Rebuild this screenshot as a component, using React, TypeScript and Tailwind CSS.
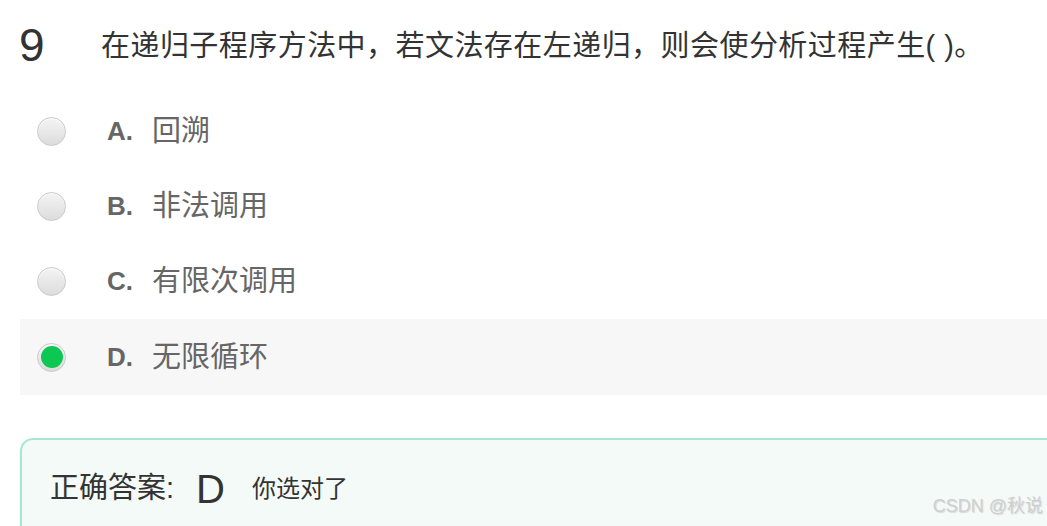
import React from 'react';

type Option = { key: string; text: string; selected?: boolean };

const options: Option[] = [
  { key: 'A', text: '回溯' },
  { key: 'B', text: '非法调用' },
  { key: 'C', text: '有限次调用' },
  { key: 'D', text: '无限循环', selected: true },
];

const font = "font-['Liberation_Sans','Noto_Sans_CJK_SC',sans-serif]";

function Radio({ checked }: { checked?: boolean }) {
  return (
    <div className="w-[29px] h-[29px] rounded-full border border-[#c9c9c9] bg-gradient-to-b from-[#f4f4f4] to-[#dcdcdc] flex items-center justify-center shadow-[inset_0_1px_1px_rgba(255,255,255,0.9)]">
      {checked && <div className="w-[22px] h-[22px] rounded-full bg-[#0cc752]" />}
    </div>
  );
}

export default function App() {
  return (
    <div className={`relative w-[1047px] h-[526px] overflow-hidden bg-white ${font}`}>
      <div className="flex items-center h-[92px] pl-[19px]">
        <span className="w-[82px] text-[46px] leading-none text-[#333] -mt-[2px]">9</span>
        <span className="text-[29px] leading-none text-[#333] tracking-[0.45px]">
          在递归子程序方法中，若文法存在左递归，则会使分析过程产生( )。
        </span>
      </div>

      <div className="flex flex-col pt-[2px]">
        {options.map((o) => (
          <div
            key={o.key}
            className={`ml-5 flex items-center h-[75px] pl-[17px] ${o.selected ? 'bg-[#f7f7f7] h-[76px]' : ''}`}
          >
            <Radio checked={o.selected} />
            <span className="ml-[41px] w-[45px] text-[26px] font-bold text-[#666]">{o.key}.</span>
            <span className="text-[29px] leading-none text-[#666]">{o.text}</span>
          </div>
        ))}
      </div>

      <div className="ml-5 mt-[43px] h-[140px] rounded-tl-[13px] border-t-2 border-l-2 border-[#a6e8cf] bg-[#f3faf8] pl-[28px] pt-[30px]">
        <div className="flex items-center h-[38px]">
          <span className="text-[29px] text-[#333]">正确答案:</span>
          <span className="ml-[22px] text-[40px] leading-none text-[#333]">D</span>
          <span className="ml-[27px] text-[24px] text-[#333]">你选对了</span>
        </div>
      </div>

      <div className="absolute right-[4px] bottom-[6px] text-[18px] font-normal text-[#cfcfcf] [text-shadow:1px_1px_1px_rgba(0,0,0,0.12)]">
        CSDN @秋说
      </div>
    </div>
  );
}
